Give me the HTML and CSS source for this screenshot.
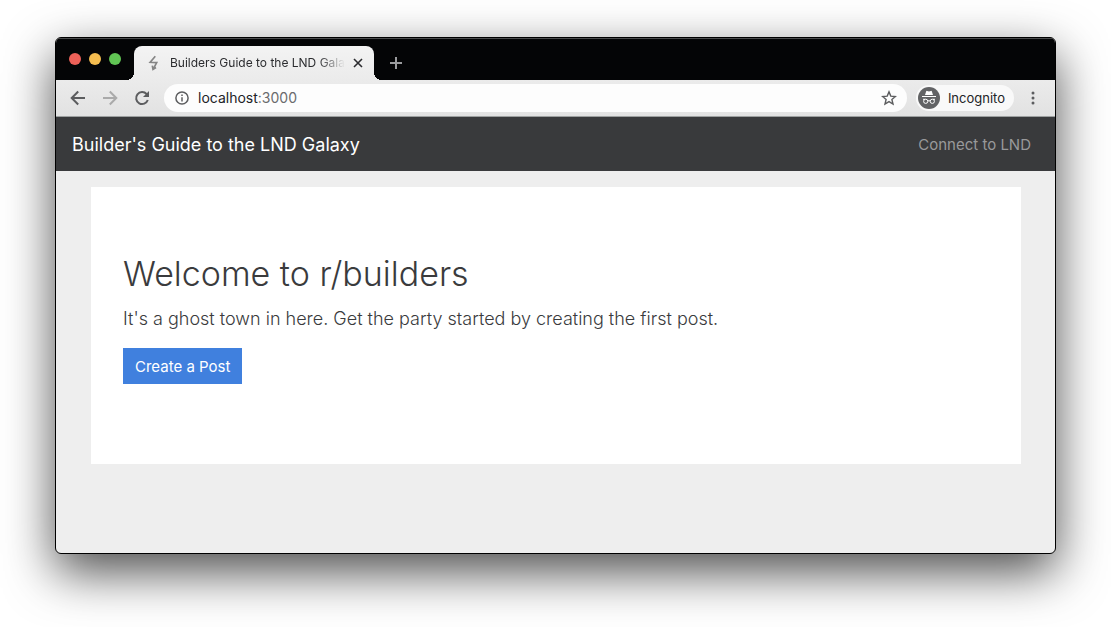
FILE: index.html
```html
<!DOCTYPE html>
<html lang="en">
<head>
<meta charset="utf-8">
<meta name="viewport" content="width=device-width, initial-scale=1">
<title>Builders Guide to the LND Galaxy</title>
<link rel="stylesheet" href="styles.css">
</head>
<body>
<div class="window">
  <header class="titlebar">
    <div class="lights">
      <button class="light close" aria-label="Close window"></button>
      <button class="light minimize" aria-label="Minimize window"></button>
      <button class="light zoom" aria-label="Zoom window"></button>
    </div>
    <div class="tab">
      <svg class="bolt" width="12" height="16" viewBox="0 0 12 16"><path d="M8.300 1.200 3.200 7.300 9.700 7.600 6.200 14.200M5.300 10.700l.7 3.700 3-1.900"/></svg>
      <span class="tab-title">Builders Guide to the LND Galaxy</span>
      <button class="icon-button tab-close" aria-label="Close tab"><svg width="10" height="10" viewBox="0 0 10 10"><path d="m1 1 8 8M9 1 1 9"/></svg></button>
    </div>
    <button class="icon-button new-tab" aria-label="New tab"><svg width="12" height="12" viewBox="0 0 12 12"><path d="M6 0v12M0 6h12"/></svg></button>
  </header>
  <div class="toolbar">
    <button class="icon-button" aria-label="Back"><svg width="16" height="16" viewBox="0 0 16 16"><path d="M15 8H2M8.2 1.5 1.7 8l6.5 6.5"/></svg></button>
    <button class="icon-button forward" aria-label="Forward"><svg width="16" height="16" viewBox="0 0 16 16"><path d="M1 8h13M7.8 1.5 14.3 8l-6.5 6.5"/></svg></button>
    <button class="icon-button" aria-label="Reload"><svg width="16" height="16" viewBox="0 0 16 16"><path d="M13.8 10A6 6 0 1 1 12.6 4L14 5.5"/><path class="solid" d="M15 1v6H9z"/></svg></button>
    <div class="address">
      <svg class="info" width="14" height="14" viewBox="0 0 14 14"><circle cx="7" cy="7" r="6.1"/><path d="M7 6.2v4.2M7 3.4V5"/></svg>
      <span class="url">localhost<span class="port">:3000</span></span>
      <button class="icon-button" aria-label="Bookmark this page"><svg class="star" width="16" height="16" viewBox="0 0 16 16"><path d="m8 1.9 1.8 4.2 4.6.4-3.5 3 1.1 4.5-4-2.4L4 14l1.100-4.500-3.500-3 4.600-.4z"/></svg></button>
    </div>
    <button class="profile">
      <svg width="22" height="22" viewBox="0 0 22 22"><circle class="badge" cx="11" cy="11" r="11"/><path class="mark" d="M4 9h14v1.100H4zM7 7.900l1.200-3.600q.2-.6.900-.4l1.900.5 1.900-.5q.7-.2.900.4L15 7.900z"/><g class="glasses"><circle cx="7.700" cy="14.300" r="2.100"/><circle cx="14.300" cy="14.300" r="2.100"/><path d="M9.800 14q1.200-.7 2.400 0M5 12.300h2M15 12.300h2"/></g></svg>
      <span>Incognito</span>
    </button>
    <button class="icon-button menu" aria-label="Menu"><svg width="4" height="14" viewBox="0 0 4 14"><circle cx="2" cy="2" r="1.500"/><circle cx="2" cy="7" r="1.500"/><circle cx="2" cy="12" r="1.500"/></svg></button>
  </div>
  <nav class="navbar">
    <a class="brand" href="#">Builder's Guide to the LND Galaxy</a>
    <a class="nav-link" href="#">Connect to LND</a>
  </nav>
  <main class="page">
    <section class="jumbotron">
      <h1 class="heading">Welcome to r/builders</h1>
      <p class="lead">It's a ghost town in here. Get the party started by creating the first post.</p>
      <button class="primary">Create a Post</button>
    </section>
  </main>
</div>
</body>
</html>
```
FILE: styles.css
```css
* {
  box-sizing: border-box;
}

body {
  margin: 0;
  min-height: 100vh;
  padding: 37px 55px 73px;
  display: flex;
  flex-direction: column;
  background: #fff;
  font-family: Inter, "Liberation Sans", sans-serif;
}

button {
  margin: 0;
  padding: 0;
  border: 0;
  background: none;
  font: inherit;
  color: inherit;
}

a {
  text-decoration: none;
}

svg {
  display: block;
  flex: none;
  fill: none;
  stroke: currentColor;
  stroke-width: 2;
}

.window {
  flex: 1;
  display: flex;
  flex-direction: column;
  overflow: hidden;
  border: 1px solid #000;
  border-radius: 6px;
  background: #eee;
  box-shadow: 0 18px 50px rgba(0, 0, 0, 0.7);
}

.titlebar {
  display: flex;
  align-items: flex-end;
  height: 42px;
  background: #040506;
  border-top: 1px solid #4a4b4c;
}

.lights {
  display: flex;
  align-self: center;
  gap: 8px;
  padding: 0 13px 2px;
}

.light {
  width: 12px;
  height: 12px;
  border-radius: 50%;
}

.close {
  background: #ed6158;
}

.minimize {
  background: #f5bd4f;
}

.zoom {
  background: #61c554;
}

.tab {
  position: relative;
  display: flex;
  align-items: center;
  width: 240px;
  height: 34px;
  padding: 0 11px 0 13px;
  border-radius: 8px 8px 0 0;
  background: linear-gradient(#f3f3f3, #ebebeb);
  color: #2b2c2f;
}

.tab::before,
.tab::after {
  content: "";
  position: absolute;
  bottom: 0;
  width: 8px;
  height: 8px;
}

.tab::before {
  right: 100%;
  background: radial-gradient(circle at 0 0, transparent 8px, #ebebeb 8px);
}

.tab::after {
  left: 100%;
  background: radial-gradient(circle at 100% 0, transparent 8px, #ebebeb 8px);
}

.bolt {
  color: #858585;
  stroke-width: 1.7;
}

.tab-title {
  flex: 1;
  margin: 0 8px 0 11px;
  overflow: hidden;
  white-space: nowrap;
  font-size: 12px;
  line-height: 16px;
  mask-image: linear-gradient(to right, #000 85%, transparent);
}

.icon-button {
  display: grid;
  place-items: center;
}

.tab-close svg {
  stroke-width: 1.6;
}

.new-tab {
  align-self: center;
  margin: 6px 0 0 16px;
  color: #9b9c9e;
}

.toolbar {
  display: flex;
  align-items: center;
  gap: 16px;
  height: 37px;
  padding: 0 20px 0 14px;
  border-bottom: 1px solid #9da0a0;
  background: linear-gradient(#ebebeb, #e2e2e2);
  color: #5c5d5f;
}

.forward {
  color: #aaa;
}

.address {
  flex: 1;
  display: flex;
  align-items: center;
  gap: 9px;
  height: 28px;
  margin-left: -2px;
  padding: 0 10px 0 11px;
  border-radius: 14px;
  background: #fdfdfd;
}

.info {
  stroke-width: 1.5;
}

.url {
  flex: 1;
  font-size: 14px;
  line-height: 20px;
  color: #222326;
}

.port {
  color: #6a6b6d;
}

.star {
  stroke-width: 1.4;
}

.profile {
  display: flex;
  align-items: center;
  gap: 8px;
  height: 26px;
  margin: 0 1px 0 -7px;
  padding: 0 9px 0 2px;
  border-radius: 13px;
  background: #f9f9f9;
  color: #222326;
  font-size: 13px;
}

.badge {
  fill: #626365;
  stroke: none;
}

.mark {
  fill: #fff;
  stroke: none;
}

.glasses {
  stroke: #fff;
  stroke-width: 1;
}

.menu circle,
.solid {
  fill: currentColor;
  stroke: none;
}

.navbar {
  display: flex;
  align-items: center;
  justify-content: space-between;
  height: 54px;
  padding: 2px 24px 0 16px;
  background: #393a3c;
}

.brand {
  color: #fff;
  font-size: 18px;
  line-height: 28px;
}

.nav-link {
  color: #98999a;
  font-size: 15px;
  line-height: 22px;
}

.page {
  padding: 16px 34px 16px 35px;
}

.jumbotron {
  padding: 64px 32px 80px;
  background: #fff;
  color: #3a3b3d;
}

.heading {
  margin: 0 0 8px;
  font-size: 34px;
  font-weight: 300;
  line-height: 46px;
}

.lead {
  margin: 0 0 15px;
  font-size: 18px;
  font-weight: 300;
  line-height: 28px;
}

.primary {
  height: 36px;
  padding: 0 12px;
  background: #4080de;
  color: #fff;
  font-size: 15px;
}
```
